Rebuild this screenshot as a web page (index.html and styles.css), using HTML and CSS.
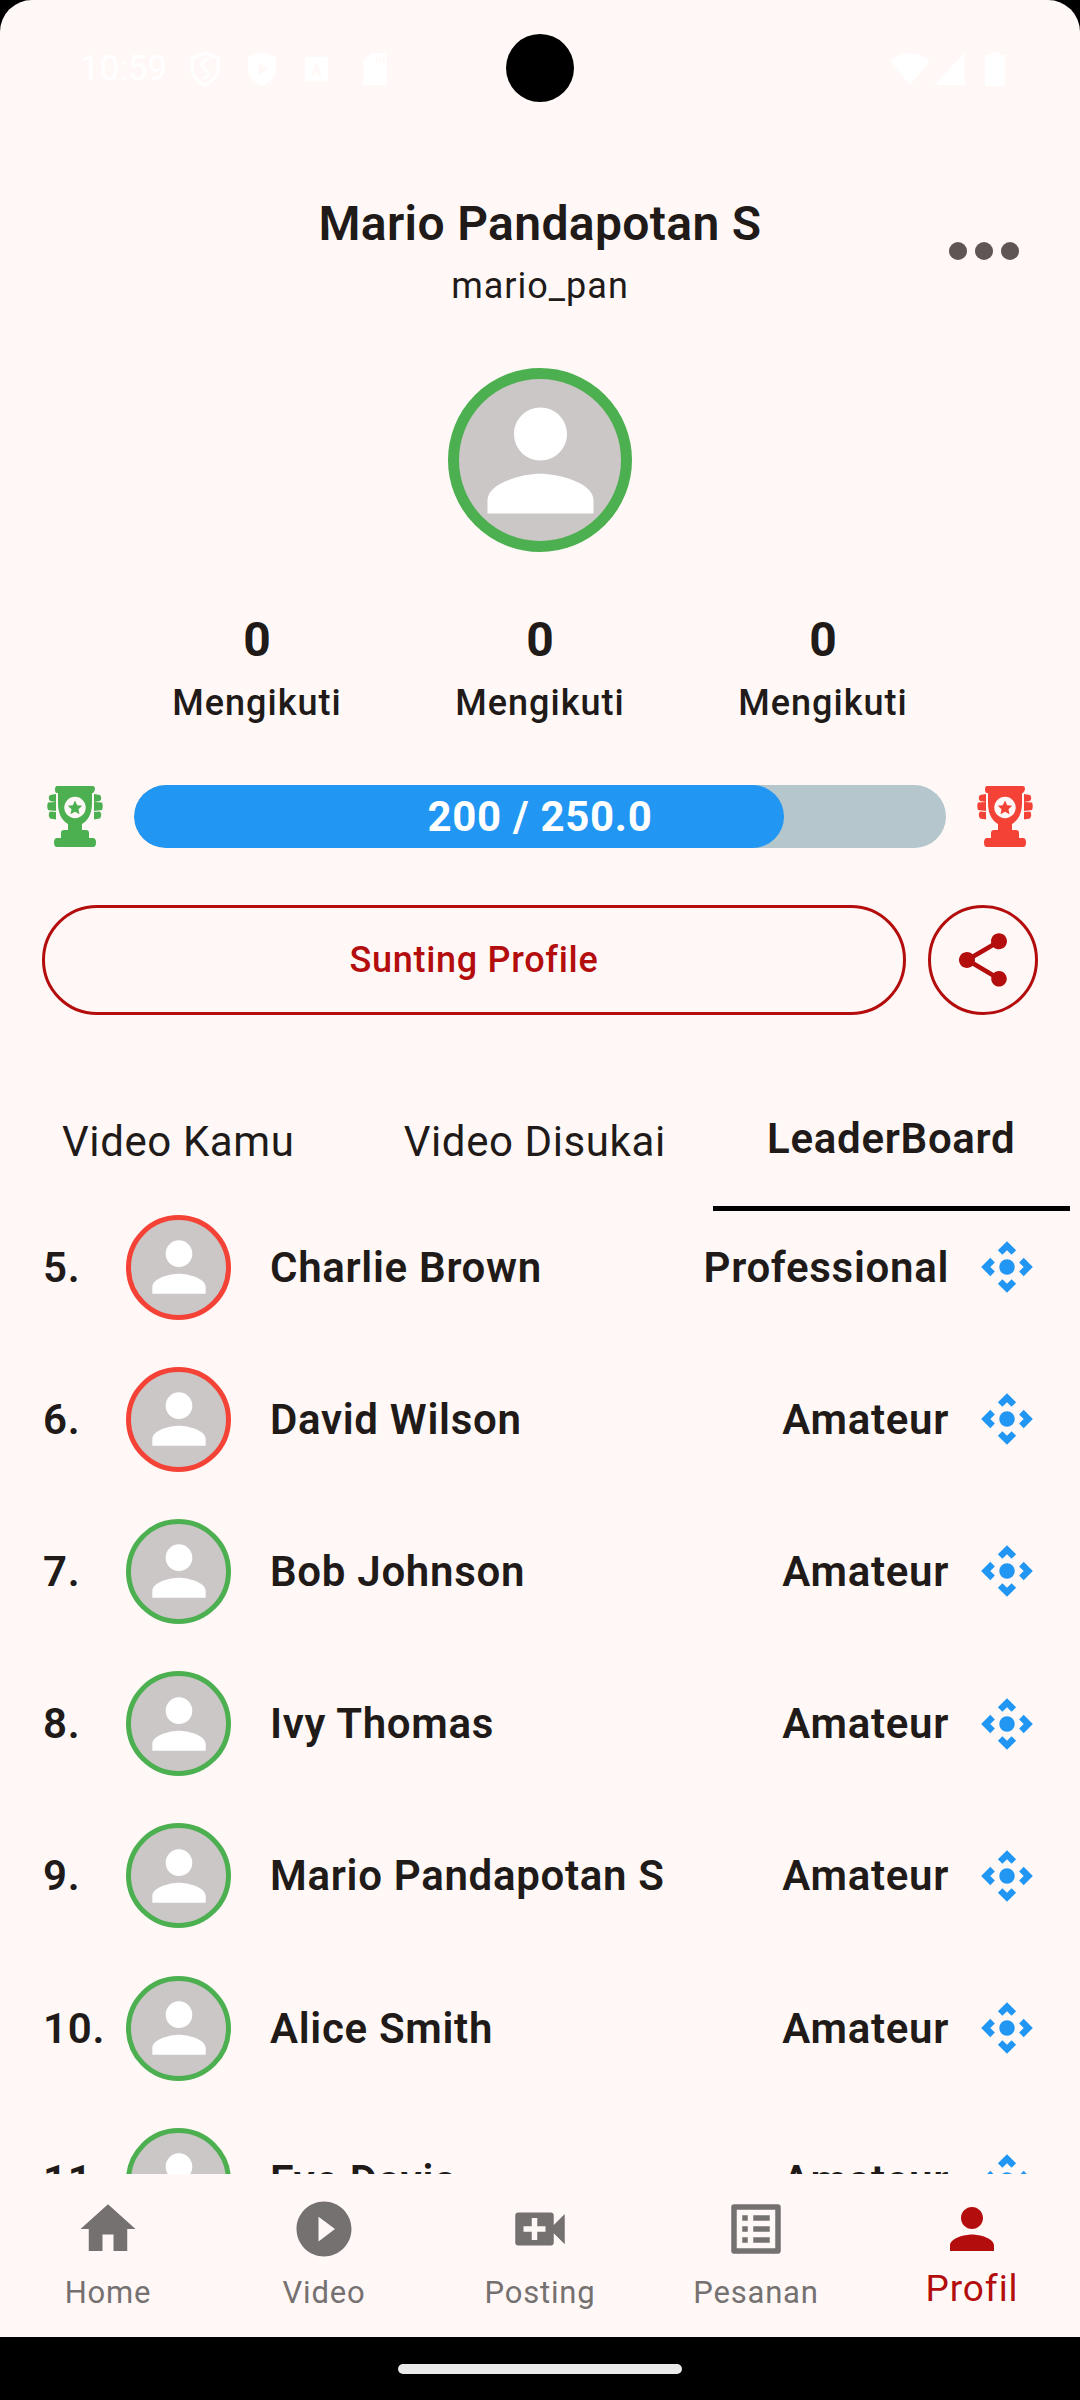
FILE: index.html
```html
<!DOCTYPE html>
<html lang="id">
<head>
<meta charset="utf-8">
<title>Profil</title>
<link rel="stylesheet" href="styles.css">
</head>
<body>
<svg class="defs" width="0" height="0" aria-hidden="true">
  <defs>
    <symbol id="trophy" viewBox="0 0 56 62">
      <path fill="currentColor" d="M10 0H46Q48 0 48 2.500T46 7H45V17C45 29 40 35 35 38V44H39Q42 44 42 47V52H46Q49 52 49 56.500T46 61H10Q7 61 7 56.500T10 52H14V47Q14 44 17 44H21V38C16 35 11 29 11 17V7H10Q8 7 8 3.500T10 0Z"/>
      <circle cx="28" cy="21.500" r="10.700" fill="#FFF8F6"/>
      <path fill="currentColor" d="M28 14.500L30.200 19.200 35.200 19.800 31.500 23.200 32.500 28.200 28 25.700 23.500 28.200 24.500 23.200 20.800 19.800 25.800 19.200Z"/>
      <path fill="currentColor" d="M3 9L9 8V16L3 15Q.5 12 3 9ZM1 16.500L9 16V25L1 24Q-.5 20 1 16.500ZM3 25.500L9 26V33.500L3 32.500Q.5 28.500 3 25.500Z"/>
      <path fill="currentColor" d="M53 9L47 8V16L53 15Q55.500 12 53 9ZM55 16.500L47 16V25L55 24Q56.500 20 55 16.500ZM53 25.500L47 26V33.500L53 32.500Q55.500 28.500 53 25.500Z"/>
    </symbol>
    <symbol id="person" viewBox="0 0 24 24">
      <path fill="currentColor" d="M12 12c2.210 0 4-1.790 4-4s-1.790-4-4-4-4 1.790-4 4 1.790 4 4 4zm0 2c-2.670 0-8 1.340-8 4v2h16v-2c0-2.660-5.330-4-8-4z"/>
    </symbol>
    <symbol id="camera" viewBox="0 0 24 24">
      <path fill="currentColor" d="M15.540 5.540L13.770 7.300 12 5.540 10.230 7.300 8.460 5.540 12 2zm2.920 10l-1.760-1.770L18.460 12l-1.760-1.770 1.760-1.770L22 12zm-10 2.920l1.770-1.760L12 18.460l1.770-1.760 1.770 1.760L12 22zm-2.920-10l1.760 1.770L5.540 12l1.760 1.770-1.760 1.770L2 12z"/>
      <circle fill="currentColor" cx="12" cy="12" r="3"/>
    </symbol>
  </defs>
</svg>

<div class="phone">
  <div class="screen">
    <div class="camera-hole"></div>
    <div class="status">
      <div class="status-left">
        <span class="clock">10:59</span>
        <svg class="st-icon" viewBox="0 0 30 36"><path fill="none" stroke="#fff" stroke-width="3" d="M15 2L28 7V17C28 25 22 31 15 34 8 31 2 25 2 17V7Z"/><path fill="none" stroke="#fff" stroke-width="2.500" d="M19 8C11 9 10 15 15 18S20 25 13 28"/></svg>
        <svg class="st-icon" viewBox="0 0 30 36"><path fill="#fff" d="M15 1L29 6V17C29 25 23 32 15 35 7 32 1 25 1 17V6ZM12 12V24L21 18Z"/></svg>
        <svg class="st-icon st-sm" viewBox="0 0 26 32"><path fill="#fff" d="M0 2H26V30H0ZM13 7L7 24H10L11.500 20H14.500L16 24H19ZM12.300 17.500L13 13 13.700 17.500Z"/></svg>
        <svg class="st-icon st-sd" viewBox="0 0 26 36"><path fill="#fff" d="M9 0H26V36H0V9ZM14 4V11H16V4ZM18 4V11H20V4ZM22 4V11H24V4Z"/></svg>
      </div>
      <div class="status-right">
        <svg class="st-wifi" viewBox="0 0 40 32"><path fill="#fff" d="M0 8C11-2 29-2 40 8L20 32Z"/></svg>
        <svg class="st-signal" viewBox="0 0 30 32"><path fill="#fff" d="M30 0V32H0Z"/></svg>
        <svg class="st-batt" viewBox="0 0 20 34"><path fill="#fff" d="M6 0H14V3H20V34H0V3H6Z"/></svg>
      </div>
    </div>

    <header class="head">
      <div class="head-side"></div>
      <div class="head-title">
        <h1 class="name">Mario Pandapotan S</h1>
        <p class="handle">mario_pan</p>
      </div>
      <div class="head-side head-more">
        <span class="dot"></span><span class="dot"></span><span class="dot"></span>
      </div>
    </header>

    <div class="hero">
      <div class="avatar avatar-lg ring-green">
        <svg class="avatar-svg"><use href="#person"/></svg>
      </div>
    </div>

    <section class="stats">
      <div class="stat"><strong class="stat-num">0</strong><span class="stat-label">Mengikuti</span></div>
      <div class="stat"><strong class="stat-num">0</strong><span class="stat-label">Mengikuti</span></div>
      <div class="stat"><strong class="stat-num">0</strong><span class="stat-label">Mengikuti</span></div>
    </section>

    <section class="progress">
      <svg class="trophy t-green"><use href="#trophy"/></svg>
      <div class="track">
        <div class="fill" style="width:80%"></div>
        <span class="track-label">200 / 250.0</span>
      </div>
      <svg class="trophy t-red"><use href="#trophy"/></svg>
    </section>

    <section class="actions">
      <button class="btn-edit">Sunting Profile</button>
      <button class="btn-share" aria-label="Bagikan">
        <svg viewBox="0 0 24 24"><path fill="currentColor" d="M18 16.080c-.760 0-1.440.300-1.960.770L8.910 12.700c.050-.230.090-.460.090-.700s-.040-.470-.090-.700l7.050-4.110c.540.500 1.250.810 2.040.810 1.660 0 3-1.340 3-3s-1.340-3-3-3-3 1.340-3 3c0 .240.040.470.090.700L8.040 9.810C7.500 9.310 6.790 9 6 9c-1.660 0-3 1.340-3 3s1.340 3 3 3c.790 0 1.500-.310 2.040-.810l7.120 4.160c-.050.210-.080.430-.080.650 0 1.610 1.310 2.920 2.920 2.920 1.610 0 2.920-1.310 2.920-2.920s-1.310-2.920-2.920-2.920z"/></svg>
      </button>
    </section>

    <nav class="tabs">
      <div class="tab">Video Kamu</div>
      <div class="tab">Video Disukai</div>
      <div class="tab tab-on">LeaderBoard</div>
    </nav>

    <div class="board">
      <div class="board-inner">
        <div class="row"><span class="rank">5.</span><div class="avatar avatar-sm ring-red"><svg class="avatar-svg"><use href="#person"/></svg></div><span class="who">Charlie Brown</span><span class="tier">Professional</span><svg class="move"><use href="#camera"/></svg></div>
        <div class="row"><span class="rank">6.</span><div class="avatar avatar-sm ring-red"><svg class="avatar-svg"><use href="#person"/></svg></div><span class="who">David Wilson</span><span class="tier">Amateur</span><svg class="move"><use href="#camera"/></svg></div>
        <div class="row"><span class="rank">7.</span><div class="avatar avatar-sm ring-green"><svg class="avatar-svg"><use href="#person"/></svg></div><span class="who">Bob Johnson</span><span class="tier">Amateur</span><svg class="move"><use href="#camera"/></svg></div>
        <div class="row"><span class="rank">8.</span><div class="avatar avatar-sm ring-green"><svg class="avatar-svg"><use href="#person"/></svg></div><span class="who">Ivy Thomas</span><span class="tier">Amateur</span><svg class="move"><use href="#camera"/></svg></div>
        <div class="row"><span class="rank">9.</span><div class="avatar avatar-sm ring-green"><svg class="avatar-svg"><use href="#person"/></svg></div><span class="who">Mario Pandapotan S</span><span class="tier">Amateur</span><svg class="move"><use href="#camera"/></svg></div>
        <div class="row"><span class="rank">10.</span><div class="avatar avatar-sm ring-green"><svg class="avatar-svg"><use href="#person"/></svg></div><span class="who">Alice Smith</span><span class="tier">Amateur</span><svg class="move"><use href="#camera"/></svg></div>
        <div class="row"><span class="rank">11.</span><div class="avatar avatar-sm ring-green"><svg class="avatar-svg"><use href="#person"/></svg></div><span class="who">Eve Davis</span><span class="tier">Amateur</span><svg class="move"><use href="#camera"/></svg></div>
      </div>
    </div>

    <nav class="bottom">
      <div class="item"><svg class="item-icon" viewBox="0 0 24 24"><path fill="currentColor" d="M10 20v-6h4v6h5v-8h3L12 3 2 12h3v8z"/></svg><span class="item-label">Home</span></div>
      <div class="item"><svg class="item-icon" viewBox="0 0 24 24"><path fill="currentColor" d="M12 2C6.480 2 2 6.480 2 12s4.480 10 10 10 10-4.480 10-10S17.520 2 12 2zm-2 14.500v-9l6 4.500-6 4.500z"/></svg><span class="item-label">Video</span></div>
      <div class="item"><svg class="item-icon" viewBox="0 0 24 24"><path fill="currentColor" d="M17 10.500V7c0-.550-.450-1-1-1H4c-.550 0-1 .450-1 1v10c0 .550.450 1 1 1h12c.550 0 1-.450 1-1v-3.500l4 4v-11l-4 4zM14 13h-3v3H9v-3H6v-2h3V8h2v3h3v2z"/></svg><span class="item-label">Posting</span></div>
      <div class="item"><svg class="item-icon" viewBox="0 0 24 24"><path fill="currentColor" d="M19 5v14H5V5h14m1.100-2H3.900c-.500 0-.900.400-.900.900v16.200c0 .400.400.900.900.900h16.200c.400 0 .900-.500.900-.900V3.900c0-.500-.500-.900-.900-.900zM11 7h6v2h-6V7zm0 4h6v2h-6v-2zm0 4h6v2h-6zM7 7h2v2H7zm0 4h2v2H7zm0 4h2v2H7z"/></svg><span class="item-label">Pesanan</span></div>
      <div class="item item-on"><svg class="item-icon" viewBox="0 0 24 24"><path fill="currentColor" d="M12 12c2.210 0 4-1.790 4-4s-1.790-4-4-4-4 1.790-4 4 1.790 4 4 4zm0 2c-2.670 0-8 1.340-8 4v2h16v-2c0-2.660-5.330-4-8-4z"/></svg><span class="item-label">Profil</span></div>
    </nav>
  </div>
  <div class="gesture"><span class="pill"></span></div>
</div>
</body>
</html>
```

FILE: styles.css
```css
* { box-sizing: border-box; }
html, body { margin: 0; padding: 0; }
body { width: 1080px; height: 2400px; overflow: hidden; background: #000; font-family: Roboto, "Liberation Sans", sans-serif; color: #201A19; }
.defs { position: absolute; }

.phone { width: 1080px; height: 2400px; display: flex; flex-direction: column; background: #000; }
.screen { position: relative; height: 2337px; display: flex; flex-direction: column; background: #FFF8F6; border-radius: 32px 32px 0 0; overflow: hidden; }
.gesture { flex: 1; display: flex; align-items: flex-start; justify-content: center; padding-top: 27px; }
.pill { width: 284px; height: 10px; border-radius: 5px; background: #EAEAEA; }
.camera-hole { position: absolute; left: 506px; top: 34px; width: 68px; height: 68px; border-radius: 50%; background: #000; }

.status { height: 190px; flex: none; display: flex; justify-content: space-between; align-items: flex-start; padding: 52px 75px 0 80px; }
.status-left, .status-right { display: flex; align-items: center; height: 34px; }
.clock { font-size: 35px; line-height: 34px; color: #fff; margin-right: 23px; }
.st-icon { width: 30px; height: 36px; margin-right: 27px; }
.st-sm { width: 25px; height: 28px; margin-right: 33px; }
.st-sd { width: 26px; height: 32px; margin-right: 0; }
.st-wifi { width: 40px; height: 32px; margin-right: 4px; }
.st-signal { width: 31px; height: 32px; margin-right: 20px; }
.st-batt { width: 20px; height: 34px; }

.head { display: grid; grid-template-columns: 1fr auto 1fr; flex: none; }
.head-title { text-align: center; }
.name { margin: 0; font-size: 48px; line-height: 68px; font-weight: 600; letter-spacing: 0.35px; }
.handle { margin: 6px 0 0; font-size: 36px; line-height: 44px; font-weight: 400; letter-spacing: 1px; }
.head-more { display: flex; justify-content: flex-end; gap: 8px; padding: 52px 61px 0 0; align-items: flex-start; }
.dot { width: 18px; height: 18px; border-radius: 50%; background: #5F5555; }

.hero { display: flex; justify-content: center; padding-top: 60px; flex: none; }
.avatar { display: flex; align-items: center; justify-content: center; border-radius: 50%; background: #CBC7C7; color: #fff; flex: none; border-style: solid; }
.avatar-lg { width: 184px; height: 184px; border-width: 11px; }
.avatar-lg .avatar-svg { width: 159px; height: 159px; }
.avatar-sm { width: 105px; height: 105px; border-width: 5.500px; }
.avatar-sm .avatar-svg { width: 80px; height: 80px; }
.ring-green { border-color: #4CAF50; }
.ring-red { border-color: #F44336; }

.stats { display: grid; grid-template-columns: repeat(3, 283px); justify-content: center; padding-top: 60px; flex: none; }
.stat { display: flex; flex-direction: column; align-items: center; }
.stat-num { font-size: 48px; line-height: 56px; font-weight: 700; }
.stat-label { margin-top: 13px; font-size: 36px; line-height: 44px; font-weight: 500; letter-spacing: 1px; }

.progress { display: flex; align-items: center; gap: 31px; padding: 60px 47px 0; flex: none; }
.trophy { width: 56px; height: 62px; flex: none; }
.t-green { color: #4CAF50; }
.t-red { color: #F44336; }
.track { position: relative; flex: 1; height: 63px; border-radius: 32px; background: #B5C6CD; overflow: hidden; }
.fill { height: 100%; background: #2196F3; border-radius: 32px; }
.track-label { position: absolute; inset: 0; display: flex; align-items: center; justify-content: center; color: #fff; font-size: 42px; font-weight: 700; letter-spacing: 0.7px; }

.actions { display: flex; gap: 22px; padding: 57px 42px 0; flex: none; }
.btn-edit, .btn-share { height: 110px; border: 3px solid #B30D0D; border-radius: 55px; background: transparent; color: #B30D0D; font-family: inherit; padding: 0; }
.btn-edit { flex: 1; font-size: 36px; font-weight: 500; letter-spacing: 0.7px; }
.btn-share { width: 110px; flex: none; display: flex; align-items: center; justify-content: center; }
.btn-share svg { width: 64px; height: 64px; }

.tabs { display: grid; grid-template-columns: repeat(3, 356.500px); margin-top: 87px; height: 109px; flex: none; }
.tab { text-align: center; font-size: 42px; line-height: 79px; font-weight: 400; letter-spacing: 0.6px; }
.tab-on { font-weight: 600; font-size: 42px; line-height: 73px; border-bottom: 5px solid #000; letter-spacing: 0.7px; }

.board { flex: 1; min-height: 0; overflow: hidden; }
.board-inner { margin-top: -20px; }
.row { height: 152.200px; display: flex; align-items: center; padding: 0 42px 0 43px; font-size: 42px; font-weight: 600; letter-spacing: 0.7px; }
.rank { width: 83px; flex: none; }
.who { margin-left: 39px; flex: 1; }
.tier { margin-right: 27px; }
.move { width: 62px; height: 62px; color: #2196F3; flex: none; }

.bottom { height: 163px; flex: none; display: grid; grid-template-columns: repeat(5, 216px); background: #FFF8F6; }
.item { display: flex; flex-direction: column; align-items: center; padding-top: 22px; color: #757171; }
.item-icon { width: 66px; height: 66px; flex: none; }
.item-label { font-size: 31px; line-height: 40px; margin-top: 11px; letter-spacing: 0.8px; }
.item-on { color: #B30D0D; }
.item-on .item-label { font-size: 37px; line-height: 44px; margin-top: 5px; letter-spacing: 0.9px; }
```
